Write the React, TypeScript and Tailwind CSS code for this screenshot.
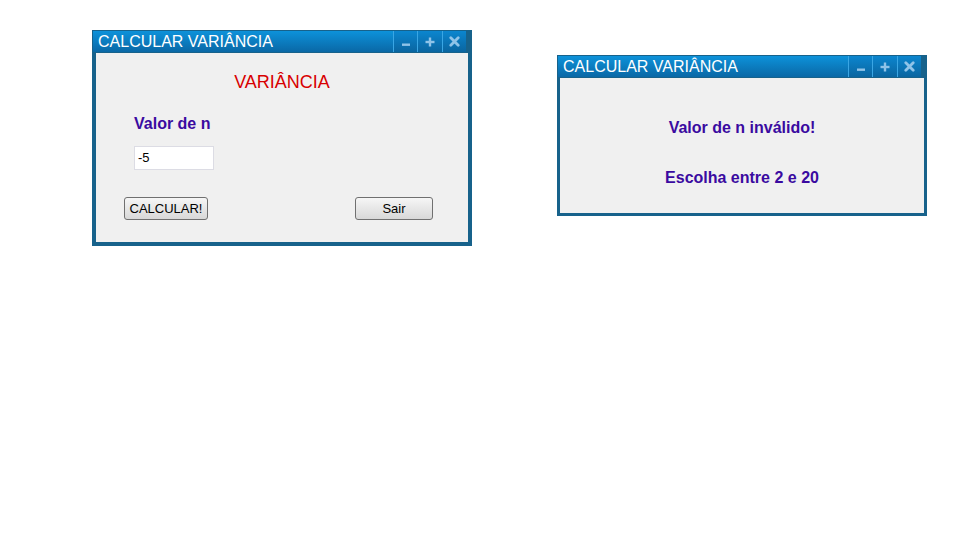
import React from 'react';

const FONT = { fontFamily: '"Liberation Sans", Arial, sans-serif' };

function TitleButtons() {
  return (
    <div className="flex h-full">
      {/* minimize */}
      <div className="w-[24px] h-full border-l border-[#3aa6e4] bg-gradient-to-b from-[#0b86cf] to-[#0a65a0] flex items-center justify-center">
        <svg width="10" height="10" viewBox="0 0 10 10">
          <rect x="1" y="6.5" width="8" height="2.4" fill="#8fc3e8" />
        </svg>
      </div>
      {/* maximize */}
      <div className="w-[25px] h-full border-l border-[#3aa6e4] bg-gradient-to-b from-[#0b86cf] to-[#0a65a0] flex items-center justify-center">
        <svg width="10" height="10" viewBox="0 0 10 10">
          <rect x="0.5" y="3.8" width="9" height="2.4" fill="#8fc3e8" />
          <rect x="3.8" y="0.5" width="2.4" height="9" fill="#8fc3e8" />
        </svg>
      </div>
      {/* close */}
      <div className="w-[24px] h-full border-l border-[#3aa6e4] bg-gradient-to-b from-[#0b86cf] to-[#0a65a0] flex items-center justify-center">
        <svg width="11" height="11" viewBox="0 0 11 11">
          <path d="M1.8 1.8 L9.2 9.2 M9.2 1.8 L1.8 9.2" stroke="#8fc3e8" strokeWidth="2.8" strokeLinecap="round" />
        </svg>
      </div>
    </div>
  );
}

function Window({
  className,
  children,
  side,
}: {
  className: string;
  children: React.ReactNode;
  side: 'wide' | 'thin';
}) {
  return (
    <div className={`absolute flex flex-col bg-[#17628b] ${className}`}>
      <div className="mt-[1px] ml-[1px] mr-[6px] h-[21px] flex items-stretch bg-gradient-to-b from-[#0d92da] to-[#0a68a6]">
        <div className="flex-1 flex items-center pl-[5px] pt-[1px] text-white text-[16px] leading-[18px]">
          CALCULAR VARIÂNCIA
        </div>
        <TitleButtons />
      </div>
      <div
        className={
          side === 'wide'
            ? 'flex-1 mt-[1px] mx-[4px] mb-[4px] bg-[#f0f0f0]'
            : 'flex-1 mt-[1px] mx-[3px] mb-[3px] bg-[#f0f0f0]'
        }
      >
        {children}
      </div>
    </div>
  );
}

export default function App() {
  return (
    <div className="relative w-[977px] h-[535px] bg-white overflow-hidden" style={FONT}>
      <Window className="left-[92px] top-[30px] w-[380px] h-[216px]" side="wide">
        <div className="flex flex-col">
          <div className="mt-[19px] h-[20px] text-center text-[18px] leading-[20px] text-[#d80000]">
            VARIÂNCIA
          </div>
          <div className="mt-[23px] ml-[38px] h-[18px] text-[16px] leading-[18px] font-bold text-[#3a0aa0]">
            Valor de n
          </div>
          <div className="mt-[13px] ml-[38px] w-[80px] h-[24px] bg-white border border-[#dcdce4] flex items-center pl-[3px] text-[13px] text-black">
            -5
          </div>
          <div className="mt-[27px] pl-[28px] pr-[35px] flex justify-between">
            <button className="w-[84px] h-[23px] rounded-[3px] border border-[#707070] bg-gradient-to-b from-[#f6f6f6] to-[#d8d8d8] text-[13px] leading-[15px] text-black">
              CALCULAR!
            </button>
            <button className="w-[78px] h-[23px] rounded-[3px] border border-[#707070] bg-gradient-to-b from-[#f6f6f6] to-[#d8d8d8] text-[13px] leading-[15px] text-black">
              Sair
            </button>
          </div>
        </div>
      </Window>

      <Window className="left-[557px] top-[55px] w-[370px] h-[161px]" side="thin">
        <div className="flex flex-col items-center">
          <div className="mt-[41px] h-[18px] text-[16px] leading-[18px] font-bold text-[#3a0aa0]">
            Valor de n inválido!
          </div>
          <div className="mt-[32px] h-[18px] text-[16px] leading-[18px] font-bold text-[#3a0aa0]">
            Escolha entre 2 e 20
          </div>
        </div>
      </Window>
    </div>
  );
}
